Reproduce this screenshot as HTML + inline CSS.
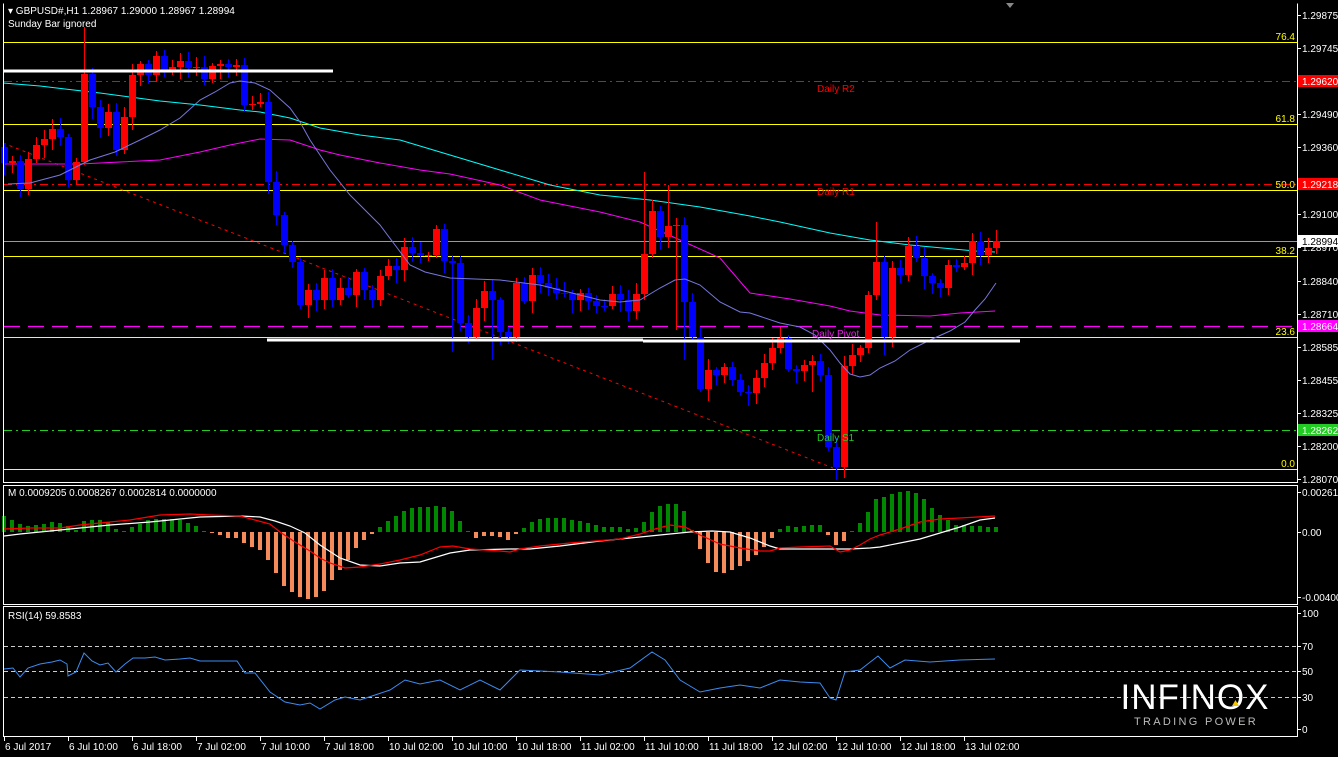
<!DOCTYPE html>
<html><head><meta charset="utf-8"><style>
html,body{margin:0;padding:0;background:#000;width:1338px;height:757px;overflow:hidden}
svg{display:block}
text{font-family:"Liberation Sans",sans-serif;font-size:10px}
</style></head><body>
<svg id="s" width="1338" height="757" xmlns="http://www.w3.org/2000/svg">
<rect width="1338" height="757" fill="#000"/>
<g id="g"></g>
<g fill="none" stroke="#fff" stroke-width="1">
<path d="M3.5 3.5V482.5H1297.5V3.5"/>
<path d="M3.5 485.5H1297.5V604.5H3.5Z"/>
<path d="M3.5 606.5H1297.5V736.5H3.5Z"/>
</g>
<polygon points="1006,3 1014,3 1010,8" fill="#888"/>
<text x="8" y="14" fill="#fff">▾ GBPUSD#,H1  1.28967 1.29000 1.28967 1.28994</text>
<text x="8" y="27" fill="#fff">Sunday Bar ignored</text>
<text x="8" y="496" fill="#fff">M 0.0009205 0.0008267 0.0002814 0.0000000</text>
<text x="8" y="619" fill="#fff">RSI(14) 59.8583</text>
<text x="817" y="92" fill="#f00">Daily R2</text>
<text x="817" y="195" fill="#f00">Daily R1</text>
<text x="812" y="337" fill="#e020e0">Daily Pivot</text>
<text x="817" y="441" fill="#2c2">Daily S1</text>
<g fill="#ff0" text-anchor="end">
<text x="1295" y="40">76.4</text><text x="1295" y="122">61.8</text><text x="1295" y="188">50.0</text>
<text x="1295" y="254">38.2</text><text x="1295" y="335">23.6</text><text x="1295" y="467">0.0</text>
</g>
<g id="ax"></g>
<text x="1195" y="709" fill="#fff" text-anchor="middle" style="font-size:35px;letter-spacing:1px">INFINOX</text>
<polygon points="1232,706 1239,706 1235.5,700" fill="#f5c400"/>
<text x="1196" y="725" fill="#bbb" text-anchor="middle" style="font-size:11px;letter-spacing:2.3px">TRADING POWER</text>
</svg>
<script>
(function(){
var NS="http://www.w3.org/2000/svg",g=document.getElementById('g'),ax=document.getElementById('ax');
function el(p,t,a,txt){var e=document.createElementNS(NS,t);for(var k in a)e.setAttribute(k,a[k]);if(txt!=null)e.textContent=txt;p.appendChild(e);return e;}
function pl(pts,c,w){el(g,'polyline',{points:pts.map(function(p){return p.join(',')}).join(' '),fill:'none',stroke:c,'stroke-width':w||1});}
function hl(y,x1,x2,c,w,da){var a={x1:x1,x2:x2,y1:y,y2:y,stroke:c,'stroke-width':w||1};if(da)a['stroke-dasharray']=da;el(g,'line',a);}
[42,124,190,256,337,469].forEach(function(y){hl(y+.5,4,1297,'#ff0',1)});
hl(81.5,4,1297,'#f00',1,'8,4,2,4');hl(184.5,4,1297,'#f00',1,'8,4,2,4');
hl(326.5,4,1297,'#f0f',1.3,'16,8');hl(430.5,4,1297,'#2c2',1,'8,4,2,4');
hl(241.5,4,1297,'#999',1);
el(g,'line',{x1:3,y1:143,x2:833,y2:468,stroke:'#f00','stroke-width':1,'stroke-dasharray':'3,4'});
pl([[3,83],[40,86],[65,89],[100,93],[130,97],[160,101],[200,105],[240,110],[260,112],[290,118],[320,128],[360,135],[400,140],[450,155],[500,170],[550,185],[600,195],[650,200],[700,207],[750,216],[780,222],[830,233],[870,240],[910,245],[975,251],[995,252]],'#0ff',1);
pl([[3,164],[80,164],[120,162],[160,160],[200,152],[230,145],[260,139],[290,140],[320,150],[340,155],[380,163],[420,170],[450,174],[500,185],[540,200],[600,212],[640,222],[680,240],[720,258],[750,293],[790,299],[830,306],[850,311],[880,315],[930,316],[960,313],[995,311]],'#f0f',1);
var c=[147,163,161,189,159,145,139,129,137,180,162,74,107,128,112,150,117,75,64,75,56,72,67,61,68,67,79,66,64,67,65,105,104,102,182,215,245,262,305,290,300,278,300,288,295,272,290,300,276,266,270,247,253,256,255,229,261,263,323,337,308,291,300,332,337,283,301,275,283,288,293,293,300,293,301,306,306,294,300,311,294,254,211,237,226,225,302,337,389,370,375,367,380,392,393,378,363,348,338,369,371,365,361,375,447,467,366,355,348,295,262,337,268,275,246,258,276,283,288,265,267,263,241,255,248,241];
var ov={11:[27,null],81:[172,null],82:[200,null],85:[null,330],110:[222,300],111:[null,355],102:[null,392],86:[null,360],84:[185,null],57:[null,352],62:[null,360],63:[null,345]};
for(var i=1;i<c.length;i++){var o=c[i-1],cl=c[i],x=4+8*(i-1);var bt=Math.min(o,cl),bb=Math.max(o,cl);
var r1=((i*37)%9)+3,r2=((i*53)%11)+3;var hi=bt-r1,lo=bb+r2;if(ov[i]){if(ov[i][0])hi=ov[i][0];if(ov[i][1])lo=ov[i][1];}
var col=cl<o?'#f00':'#00f';
el(g,'line',{x1:x+.5,x2:x+.5,y1:hi,y2:lo,stroke:col,'stroke-width':1});
el(g,'rect',{x:x-3,y:bt,width:7,height:Math.max(1,bb-bt),fill:col});}
pl([[8,184],[30,183],[60,175],[90,160],[115,152],[140,140],[160,130],[180,118],[200,100],[215,92],[230,83],[240,81],[255,83],[270,90],[290,108],[300,122],[310,140],[330,170],[350,195],[370,215],[380,225],[395,245],[410,265],[425,272],[450,278],[500,280],[540,285],[580,295],[600,300],[620,302],[640,300],[660,288],[675,280],[685,279],[700,285],[720,302],[740,312],[750,313],[780,323],[800,327],[815,335],[830,350],[840,363],[850,374],[860,377],[870,375],[880,368],[895,361],[910,350],[930,340],[950,331],[965,322],[975,310],[985,299],[996,283]],'#7777dd',1);
hl(71,3,333,'#fff',3);hl(340,267,643,'#fff',3);hl(341,643,1020,'#fff',3);
var h=[16,12,8,6,7,8,10,9,6,2,11,12,12,10,3,1,5,8,12,13,13,13,12,9,6,1,-1,-3,-6,-6,-11,-15,-18,-28,-41,-54,-60,-65,-67,-65,-59,-48,-38,-28,-16,-8,-2,5,11,16,21,24,25,25,26,25,21,11,1,-6,-4,-4,-5,-8,-2,4,10,13,14,14,14,12,11,9,7,5,5,5,3,4,10,20,26,28,28,21,2,-17,-31,-40,-41,-38,-34,-29,-23,-15,-6,3,6,5,6,7,7,-3,-13,-9,1,9,20,33,35,38,40,41,39,33,24,17,12,7,7,6,6,5,5];
var Z=532;h.forEach(function(v,i){var x=4+8*i-2;if(v>=0)el(g,'rect',{x:x,y:Z-v,width:4,height:Math.max(1,v),fill:'#080'});else el(g,'rect',{x:x,y:Z,width:4,height:-v,fill:'#f58a5a'});});
pl([[4,536],[20,534],[50,531],[80,528],[110,525],[150,522],[200,517],[240,516],[260,517],[275,521],[290,526],[305,533],[320,545],[340,558],[360,565],[380,566],[400,563],[420,562],[440,556],[450,553],[470,550],[510,549],[530,549],[560,546],[600,541],[630,538],[660,535],[690,532],[712,531],[730,532],[750,538],[770,546],[780,549],[800,549],[850,549],[870,548],[880,547],[900,543],[920,539],[940,533],[960,527],[980,520],[995,518]],'#fff',1.2);
pl([[4,529],[30,528],[60,528],[80,525],[110,522],[130,520],[160,515],[190,514],[210,515],[240,516],[255,520],[270,524],[280,532],[295,542],[310,551],[320,558],[330,563],[345,568],[360,567],[380,564],[400,560],[420,555],[440,547],[453,546],[470,549],[500,551],[510,552],[520,549],[540,546],[570,543],[620,539],[640,534],[655,529],[670,525],[685,527],[700,535],[720,544],[740,548],[760,551],[770,551],[780,548],[800,547],[830,546],[840,552],[850,550],[860,545],[870,539],[880,535],[900,529],[920,522],[940,519],[960,518],[995,516]],'#f00',1.2);
[646,671,697].forEach(function(y){hl(y+.5,4,1297,'#ccc',1,'4,3')});
pl([[4,669],[13,668],[20,677],[28,668],[40,664],[52,662],[60,660],[67,664],[68,676],[76,672],[84,653],[92,661],[100,665],[108,663],[116,672],[125,664],[133,658],[145,658],[155,657],[165,660],[180,659],[190,658],[200,661],[237,661],[245,673],[255,673],[270,692],[285,702],[300,705],[310,703],[320,709],[335,700],[345,697],[360,700],[372,696],[390,690],[405,680],[420,684],[440,680],[460,690],[480,680],[500,690],[520,670],[560,672],[600,675],[630,668],[652,652],[665,660],[680,680],[700,692],[720,688],[740,685],[760,688],[780,680],[800,682],[820,683],[830,698],[836,700],[845,672],[860,670],[878,656],[890,668],[905,660],[930,662],[960,660],[995,659]],'#3c8cf0',1);
function lab(y,t,bg,fg){el(ax,'line',{x1:1297,x2:1301,y1:y+.5,y2:y+.5,stroke:'#fff'});if(bg)el(ax,'rect',{x:1298,y:y-6,width:40,height:12,fill:bg});el(ax,'text',{x:1302,y:y+4,fill:fg||'#fff'},t);}
[[15,'1.29875'],[48,'1.29745'],[114,'1.29490'],[147,'1.29360'],[214,'1.29100'],[247,'1.28970'],[281,'1.28840'],[314,'1.28710'],[347,'1.28585'],[380,'1.28455'],[413,'1.28325'],[446,'1.28200'],[479,'1.28070']].forEach(function(a){lab(a[0],a[1])});
lab(81,'1.29620','#f00');lab(184,'1.29218','#f00');lab(241,'1.28994','#fff','#000');lab(326,'1.28664','#f0f');lab(430,'1.28262','#2c2');
[[492,'0.002618'],[532,'0.00'],[597,'-0.004004'],[613,'100'],[646,'70'],[671,'50'],[697,'30'],[729,'0']].forEach(function(a){lab(a[0],a[1])});
['6 Jul 2017','6 Jul 10:00','6 Jul 18:00','7 Jul 02:00','7 Jul 10:00','7 Jul 18:00','10 Jul 02:00','10 Jul 10:00','10 Jul 18:00','11 Jul 02:00','11 Jul 10:00','11 Jul 18:00','12 Jul 02:00','12 Jul 10:00','12 Jul 18:00','13 Jul 02:00'].forEach(function(t,i){var x=4+64*i;el(ax,'line',{x1:x+.5,x2:x+.5,y1:736,y2:741,stroke:'#fff'});el(ax,'text',{x:x+1,y:750,fill:'#fff'},t);});
})();
</script>
</body></html>
